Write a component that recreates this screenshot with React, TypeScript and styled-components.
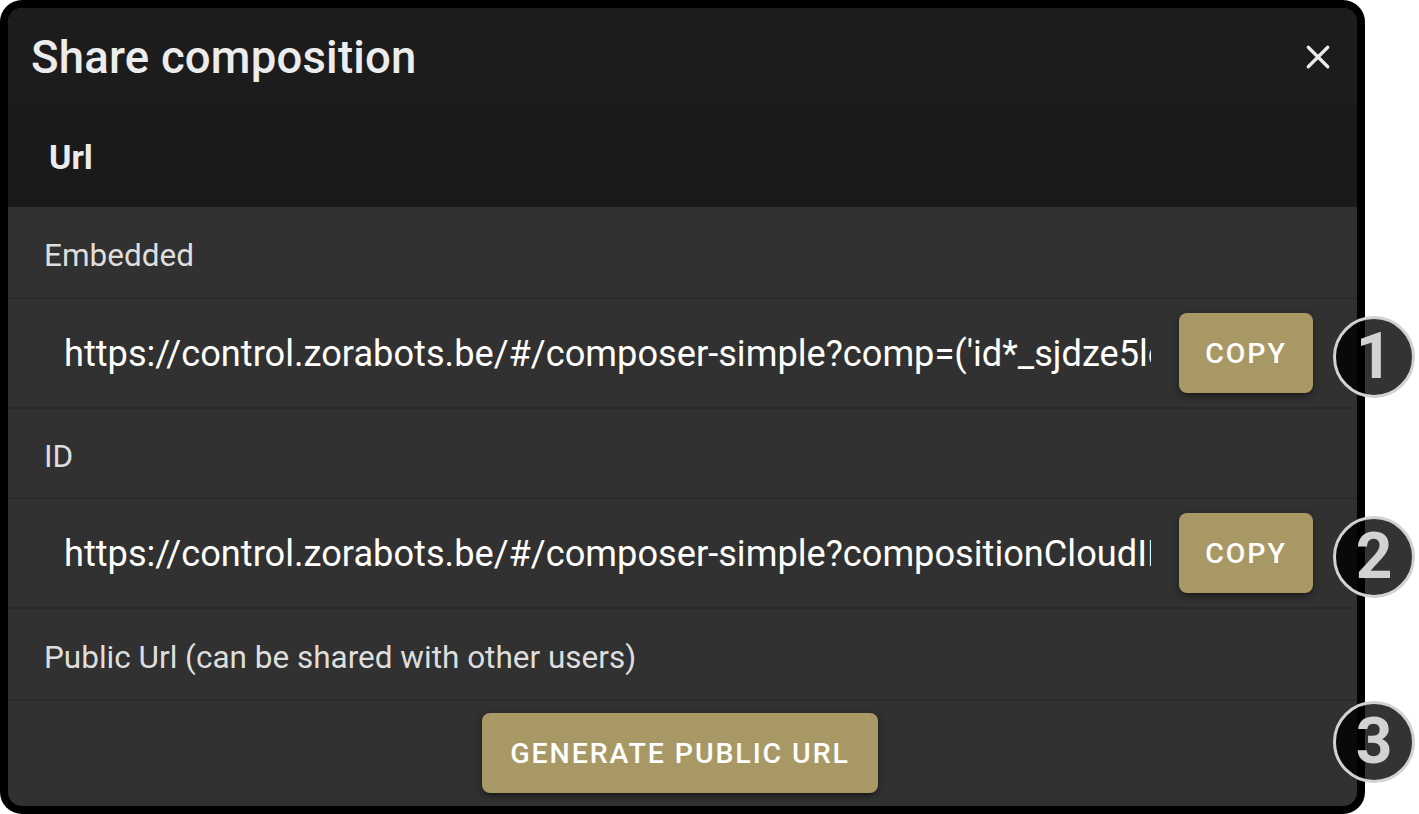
import React from "react";
import styled, { createGlobalStyle } from "styled-components";

const Global = createGlobalStyle`
  html, body { margin: 0; padding: 0; background: #ffffff; }
  body { font-family: Roboto, "Liberation Sans", Arial, sans-serif; width: 1419px; height: 814px; overflow: hidden; }
`;

const Frame = styled.div`
  position: relative;
  width: 1365px;
  height: 814px;
  box-sizing: border-box;
  padding: 8px;
  background: #000;
  border-radius: 22px;
`;

const Dialog = styled.div`
  height: 100%;
  display: flex;
  flex-direction: column;
  background: #313131;
  border-radius: 14px;
  overflow: hidden;
`;

const Header = styled.div`
  height: 98px;
  flex: none;
  display: flex;
  align-items: center;
  justify-content: space-between;
  padding: 0 23px 0 23px;
  background: #1c1c1c;
`;

const Title = styled.h2`
  margin: 0;
  font-size: 45.5px;
  font-weight: 500;
  color: #ececec;
  letter-spacing: 0.2px;
`;

const CloseButton = styled.button`
  background: none;
  border: none;
  padding: 0;
  width: 32px;
  height: 32px;
  display: flex;
  align-items: center;
  justify-content: center;
  cursor: pointer;
`;

const SectionBar = styled.div`
  height: 101px;
  flex: none;
  display: flex;
  align-items: center;
  padding-left: 41px;
  background: #1a1a1a;
  font-size: 34px;
  font-weight: 700;
  color: #ececec;
`;

const LabelRow = styled.div<{ $h: number }>`
  height: ${(p) => p.$h}px;
  box-sizing: border-box;
  flex: none;
  display: flex;
  align-items: center;
  padding: 6px 0 0 36px;
  border-bottom: 2px solid #2a2a2a;
  font-size: 31.5px;
  color: #dedede;
`;

const FieldRow = styled.div`
  height: 110px;
  box-sizing: border-box;
  flex: none;
  display: flex;
  align-items: center;
  padding: 0 44px 0 56px;
  gap: 28px;
  border-bottom: 2px solid #2a2a2a;
`;

const UrlInput = styled.input`
  flex: 1;
  min-width: 0;
  background: transparent;
  border: none;
  outline: none;
  padding: 0;
  font-family: Roboto, "Liberation Sans", Arial, sans-serif;
  font-size: 36.2px;
  color: #ffffff;
`;

const GoldButton = styled.button<{ $w: number }>`
  flex: none;
  width: ${(p) => p.$w}px;
  height: 80px;
  border: none;
  border-radius: 8px;
  background: #a89866;
  color: #ffffff;
  font-family: Roboto, "Liberation Sans", Arial, sans-serif;
  font-size: 28.5px;
  font-weight: 500;
  letter-spacing: 1.9px;
  text-transform: uppercase;
  box-shadow: 0 3px 3px -2px rgba(0,0,0,0.3), 0 3px 6px 0 rgba(0,0,0,0.22), 0 1px 10px 0 rgba(0,0,0,0.18);
  cursor: pointer;
`;

const ActionRow = styled.div`
  flex: 1;
  display: flex;
  justify-content: center;
  padding: 12px 5px 0 0;
`;

const Marker = styled.div<{ $top: number }>`
  position: absolute;
  left: 1333px;
  top: ${(p) => p.$top}px;
  width: 82px;
  height: 82px;
  box-sizing: border-box;
  border-radius: 50%;
  border: 3px solid #d2d2d2;
  background: rgba(0, 0, 0, 0.8);
  display: flex;
  align-items: center;
  justify-content: center;
  font-family: Roboto, "Liberation Sans", Arial, sans-serif;
  font-size: 64px;
  font-weight: 700;
  color: #d2d2d2;
  line-height: 1;
`;

export default function App() {
  return (
    <>
      <Global />
      <Frame>
        <Dialog>
          <Header>
            <Title>Share composition</Title>
            <CloseButton aria-label="close">
              <svg width="26" height="26" viewBox="0 0 24 24">
                <path d="M3 3 L21 21 M21 3 L3 21" stroke="#ececec" strokeWidth="3" strokeLinecap="round" />
              </svg>
            </CloseButton>
          </Header>
          <SectionBar>Url</SectionBar>
          <LabelRow $h={92}>Embedded</LabelRow>
          <FieldRow>
            <UrlInput readOnly value="https://control.zorabots.be/#/composer-simple?comp=('id*_sjdze5lefg2b4xk~name*Composition'~actions*!()" />
            <GoldButton $w={134}>Copy</GoldButton>
          </FieldRow>
          <LabelRow $h={90}>ID</LabelRow>
          <FieldRow>
            <UrlInput readOnly value="https://control.zorabots.be/#/composer-simple?compositionCloudID=sjdze5lefg2b4xk" />
            <GoldButton $w={134}>Copy</GoldButton>
          </FieldRow>
          <LabelRow $h={92}>Public Url (can be shared with other users)</LabelRow>
          <ActionRow>
            <GoldButton $w={396}>Generate public url</GoldButton>
          </ActionRow>
        </Dialog>
        <Marker $top={316}>1</Marker>
        <Marker $top={516}>2</Marker>
        <Marker $top={701}>3</Marker>
      </Frame>
    </>
  );
}
